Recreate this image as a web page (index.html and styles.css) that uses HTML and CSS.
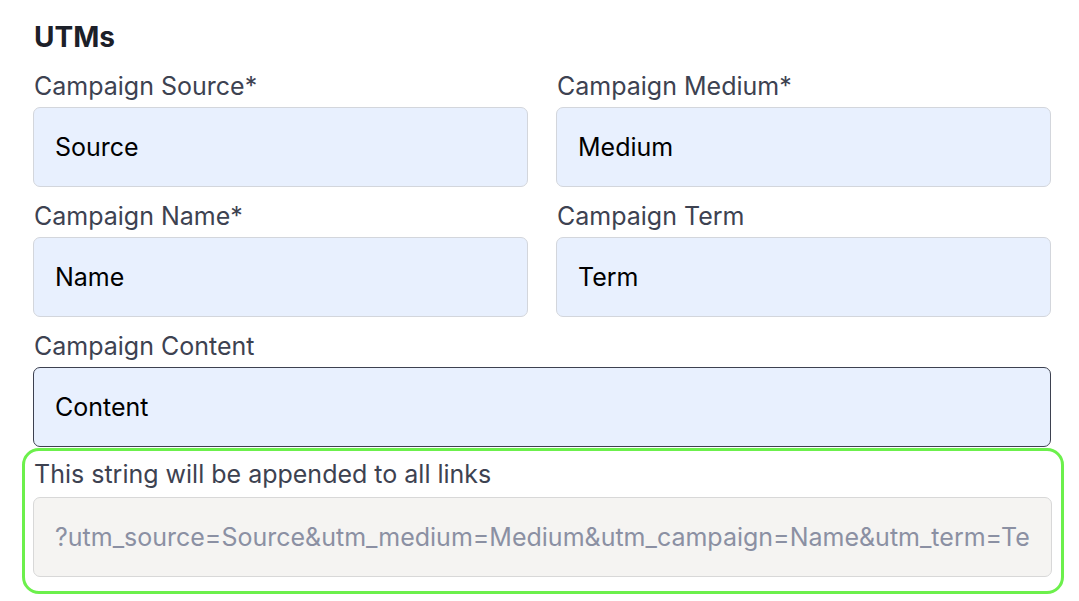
FILE: index.html
```html
<!DOCTYPE html>
<html lang="en">
<head>
<meta charset="utf-8">
<title>UTMs</title>
<link rel="stylesheet" href="styles.css">
</head>
<body>
<main class="page">
  <h2 class="title">UTMs</h2>
  <div class="grid">
    <div class="field">
      <label class="label" for="src">Campaign Source*</label>
      <input class="input" id="src" type="text" value="Source">
    </div>
    <div class="field">
      <label class="label" for="med">Campaign Medium*</label>
      <input class="input" id="med" type="text" value="Medium">
    </div>
    <div class="field">
      <label class="label" for="name">Campaign Name*</label>
      <input class="input" id="name" type="text" value="Name">
    </div>
    <div class="field">
      <label class="label" for="term">Campaign Term</label>
      <input class="input" id="term" type="text" value="Term">
    </div>
    <div class="field field-wide">
      <label class="label" for="content">Campaign Content</label>
      <input class="input input-focus" id="content" type="text" value="Content">
    </div>
  </div>
  <div class="highlight">
    <label class="label" for="result">This string will be appended to all links</label>
    <input class="input input-readonly" id="result" type="text" readonly value="?utm_source=Source&amp;utm_medium=Medium&amp;utm_campaign=Name&amp;utm_term=Term&amp;utm_content=Content">
  </div>
</main>
</body>
</html>
```

FILE: styles.css
```css
* { box-sizing: border-box; }

html, body {
  margin: 0;
  padding: 0;
  background: #ffffff;
}

body {
  font-family: Inter, "Noto Sans", "Liberation Sans", sans-serif;
  width: 1079px;
  height: 601px;
  overflow: hidden;
}

.page {
  padding: 21px 28px 0 33px;
}

.title {
  margin: 0 0 16px 1px;
  font-size: 28px;
  line-height: 32px;
  font-weight: 700;
  color: #1c2029;
}

.grid {
  display: grid;
  grid-template-columns: 495px 495px;
  column-gap: 28px;
  row-gap: 12px;
}

.field {
  display: flex;
  flex-direction: column;
  gap: 6px;
}

.field .label {
  padding-top: 2px;
}

.field-wide {
  grid-column: 1 / span 2;
}

.label {
  display: block;
  font-size: 25px;
  line-height: 30px;
  color: #3d4251;
  padding-left: 1px;
}

.input {
  display: block;
  width: 100%;
  height: 80px;
  margin: 0;
  padding: 0 21px;
  font-family: inherit;
  font-size: 25px;
  color: #000000;
  background: #e8f0fe;
  border: 1px solid #d3d6dc;
  border-radius: 7px;
  outline: none;
}

.input-focus {
  border-color: #3d4150;
}

.highlight {
  margin: 1px 0 0 -11px;
  width: 1042px;
  border: 3px solid #6cf04c;
  border-radius: 17px;
  padding: 8px 9px 14px 8px;
  display: flex;
  flex-direction: column;
  gap: 8px;
}

.input-readonly {
  background: #f5f4f2;
  color: #8b90a3;
  border-color: #d8d8d8;
}
```
